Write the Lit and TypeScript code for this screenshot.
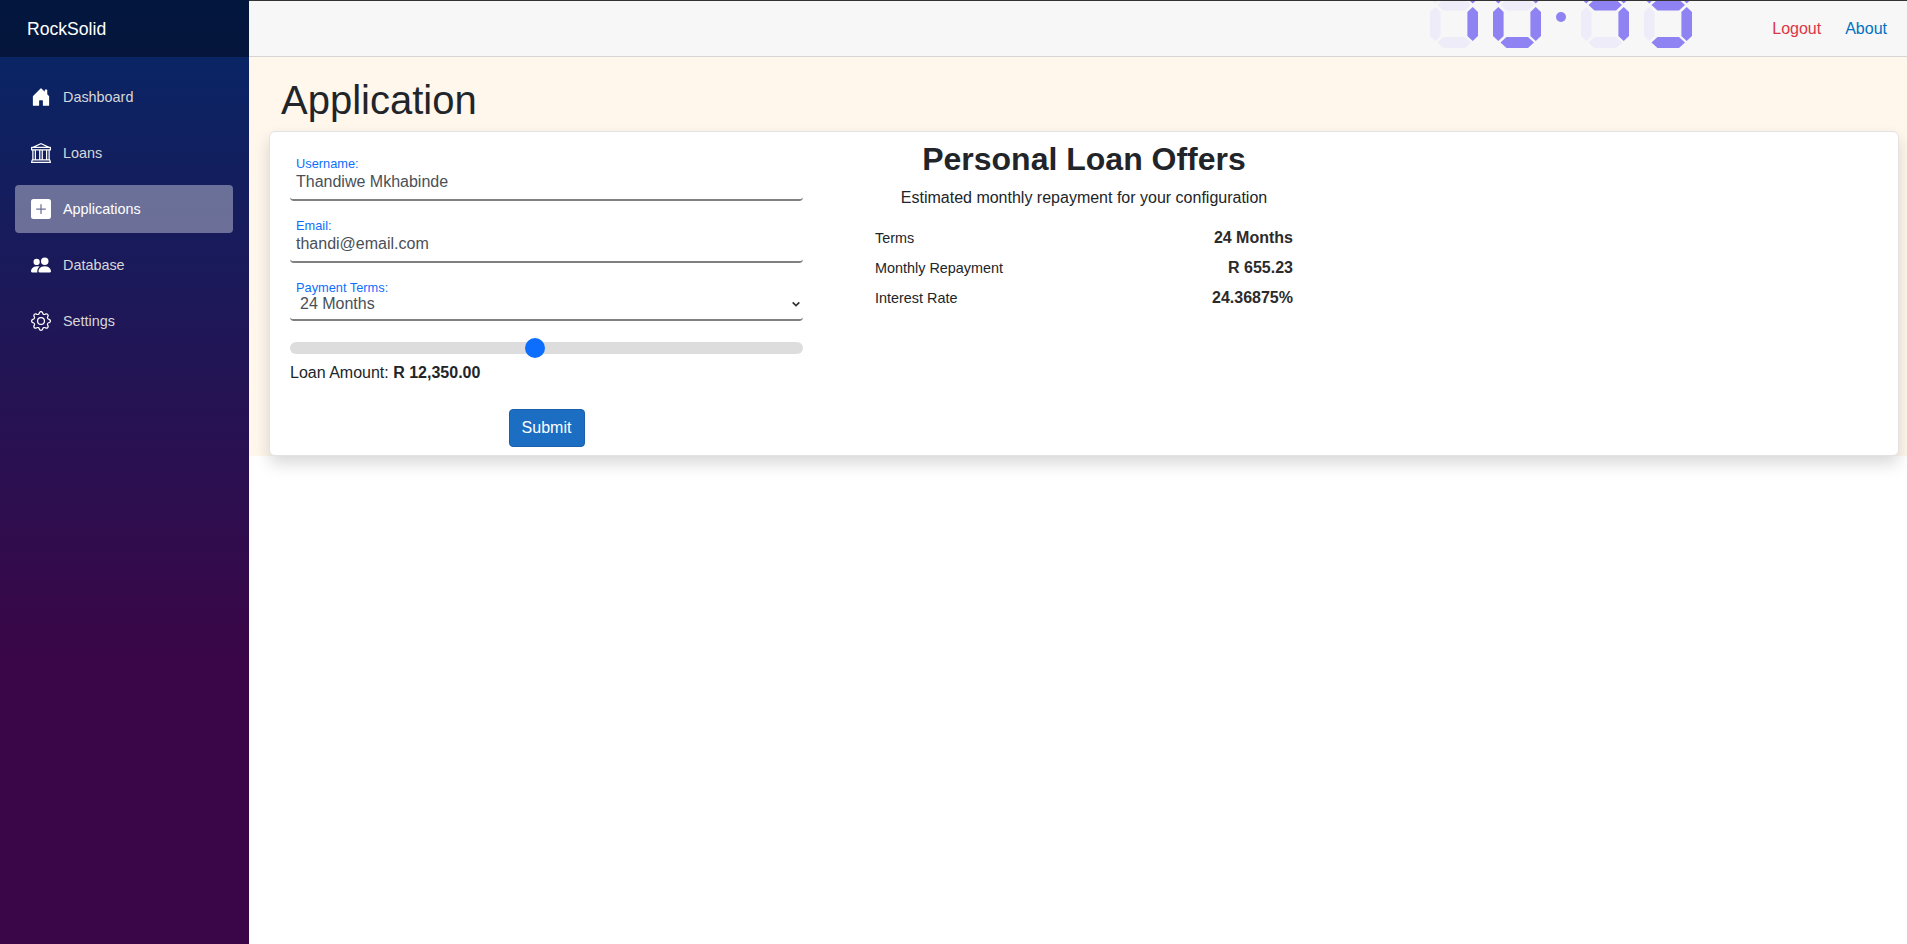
import { LitElement, html, css, svg } from "lit";
import { customElement } from "lit/decorators.js";

const ICONS: Record<string, string[]> = {
  home: ["M6.5 14.5v-3.505c0-.245.25-.495.5-.495h2c.25 0 .5.25.5.5v3.5a.5.5 0 0 0 .5.5h4a.5.5 0 0 0 .5-.5v-7a.5.5 0 0 0-.146-.354L13 5.793V2.5a.5.5 0 0 0-.5-.5h-1a.5.5 0 0 0-.5.5v1.293L8.354 1.146a.5.5 0 0 0-.708 0l-6 6A.5.5 0 0 0 1.5 7.5v7a.5.5 0 0 0 .5.5h4a.5.5 0 0 0 .5-.5Z"],
  bank: ["m8 0 6.61 3h.89a.5.5 0 0 1 .5.5v2a.5.5 0 0 1-.5.5H15v7a.5.5 0 0 1 .485.38l.5 2a.498.498 0 0 1-.485.62H.5a.498.498 0 0 1-.485-.62l.5-2A.501.501 0 0 1 1 13V6H.5a.5.5 0 0 1-.5-.5v-2A.5.5 0 0 1 .5 3h.89L8 0ZM3.777 3h8.447L8 1 3.777 3ZM2 6v7h1V6H2Zm2 0v7h2.5V6H4Zm3.5 0v7h1V6h-1Zm2 0v7H12V6H9.5ZM13 6v7h1V6h-1Zm2-1V4H1v1h14Zm-.39 9H1.39l-.25 1h13.72l-.25-1Z"],
  plus: ["M2 0a2 2 0 0 0-2 2v12a2 2 0 0 0 2 2h12a2 2 0 0 0 2-2V2a2 2 0 0 0-2-2H2zm6.5 4.5v3h3a.5.5 0 0 1 0 1h-3v3a.5.5 0 0 1-1 0v-3h-3a.5.5 0 0 1 0-1h3v-3a.5.5 0 0 1 1 0z"],
  people: ["M7 14s-1 0-1-1 1-4 5-4 5 3 5 4-1 1-1 1H7Zm4-6a3 3 0 1 0 0-6 3 3 0 0 0 0 6Zm-5.784 6A2.238 2.238 0 0 1 5 13c0-1.355.68-2.75 1.936-3.72A6.325 6.325 0 0 0 5 9c-4 0-5 3-5 4s1 1 1 1h4.216ZM4.5 8a2.5 2.5 0 1 0 0-5 2.5 2.5 0 0 0 0 5Z"],
  gear: [
    "M8 4.754a3.246 3.246 0 1 0 0 6.492 3.246 3.246 0 0 0 0-6.492zM5.754 8a2.246 2.246 0 1 1 4.492 0 2.246 2.246 0 0 1-4.492 0z",
    "M9.796 1.343c-.527-1.79-3.065-1.79-3.592 0l-.094.319a.873.873 0 0 1-1.255.52l-.292-.16c-1.64-.892-3.433.902-2.54 2.541l.159.292a.873.873 0 0 1-.52 1.255l-.319.094c-1.79.527-1.79 3.065 0 3.592l.319.094a.873.873 0 0 1 .52 1.255l-.16.292c-.892 1.64.901 3.434 2.541 2.54l.292-.159a.873.873 0 0 1 1.255.52l.094.319c.527 1.79 3.065 1.79 3.592 0l.094-.319a.873.873 0 0 1 1.255-.52l.292.16c1.64.893 3.434-.902 2.54-2.541l-.159-.292a.873.873 0 0 1 .52-1.255l.319-.094c1.79-.527 1.79-3.065 0-3.592l-.319-.094a.873.873 0 0 1-.52-1.255l.16-.292c.893-1.64-.902-3.433-2.541-2.54l-.292.159a.873.873 0 0 1-1.255-.52l-.094-.319zm-2.633.283c.246-.835 1.428-.835 1.674 0l.094.319a1.873 1.873 0 0 0 2.693 1.115l.291-.16c.764-.415 1.6.42 1.184 1.185l-.159.292a1.873 1.873 0 0 0 1.116 2.692l.318.094c.835.246.835 1.428 0 1.674l-.319.094a1.873 1.873 0 0 0-1.115 2.693l.16.291c.415.764-.42 1.6-1.185 1.184l-.291-.159a1.873 1.873 0 0 0-2.693 1.116l-.094.318c-.246.835-1.428.835-1.674 0l-.094-.319a1.873 1.873 0 0 0-2.692-1.115l-.292.16c-.764.415-1.6-.42-1.184-1.185l.159-.291A1.873 1.873 0 0 0 1.945 8.93l-.319-.094c-.835-.246-.835-1.428 0-1.674l.319-.094A1.873 1.873 0 0 0 3.06 4.377l-.16-.292c-.415-.764.42-1.6 1.185-1.184l.292.159a1.873 1.873 0 0 0 2.692-1.115l.094-.319z",
  ],
};

const NAV = [
  { label: "Dashboard", icon: "home" },
  { label: "Loans", icon: "bank" },
  { label: "Applications", icon: "plus", active: true },
  { label: "Database", icon: "people" },
  { label: "Settings", icon: "gear" },
];

// seven segments: a top, b upper right, c lower right, d bottom, e lower left, f upper left, g middle
const DIGIT_SEGMENTS: Record<string, string> = {
  "0": "abcdef",
  "1": "bc",
  "4": "bcfg",
  "9": "abcdfg",
};

function hSeg(cy: number) {
  return `7.5,${cy} 13.5,${cy - 5.5} 35,${cy - 5.5} 41,${cy} 35,${cy + 5.5} 13.5,${cy + 5.5}`;
}
function vSeg(x: number, cy: number) {
  return `${x + 5.3},${cy - 17} ${x + 10.6},${cy - 12} ${x + 10.6},${cy + 12} ${x + 5.3},${cy + 17} ${x},${cy + 12} ${x},${cy - 12}`;
}

const SEG_POINTS: Record<string, string> = {
  a: hSeg(-32.5),
  b: vSeg(37.4, -13.5),
  c: vSeg(37.4, 24),
  d: hSeg(42.5),
  e: vSeg(0, 24),
  f: vSeg(0, -13.5),
  g: hSeg(5),
};

function digit(d: string, x: number) {
  const lit = DIGIT_SEGMENTS[d];
  return svg`<g transform="translate(${x} 0)">
    ${Object.keys(SEG_POINTS).map(
      (k) => svg`<polygon class=${lit.includes(k) ? "on" : "off"} points=${SEG_POINTS[k]}></polygon>`
    )}
  </g>`;
}

@customElement("app-root")
export class AppRoot extends LitElement {
  static styles = css`
    :host {
      display: block;
      font-family: "Liberation Sans", Arial, sans-serif;
      color: #212529;
      background: #fff;
    }
    * { box-sizing: border-box; }
    .edge { height: 1px; background: #333; }
    .app { display: flex; min-height: 943px; }
    .sidebar {
      flex: 0 0 249px;
      background-image: linear-gradient(180deg, rgb(5, 39, 103) 0%, #3a0647 70%);
      margin-top: -1px;
    }
    .brand {
      height: 57px;
      background: rgba(0, 0, 0, 0.4);
      color: #fff;
      font-size: 17.6px;
      line-height: 58px;
      padding-left: 27px;
    }
    .nav { display: flex; flex-direction: column; gap: 8px; padding: 16px 16px 0 15px; }
    .link {
      display: flex;
      align-items: center;
      gap: 12px;
      height: 48px;
      padding-left: 16px;
      border-radius: 4px;
      color: #d7d7d7;
      font-size: 14.4px;
      text-decoration: none;
    }
    .link.active { background: rgba(255, 255, 255, 0.37); color: #fff; }
    .link svg { width: 20px; height: 20px; fill: #fff; flex: none; }
    .main { flex: 1; min-width: 0; display: flex; flex-direction: column; }
    .top {
      height: 56px;
      flex: none;
      display: flex;
      align-items: flex-start;
      background: #f7f7f7;
      border-bottom: 1px solid #d6d5d5;
      overflow: hidden;
    }
    .clock { display: block; width: 263px; height: 55px; margin: 0 0 0 auto; overflow: hidden; }
    .clock .on { fill: #8f82f2; }
    .clock .off { fill: #eeecf9; }
    .clock circle { fill: #8f82f2; }
    .top-links { display: flex; gap: 24px; padding: 0 20px 0 79px; line-height: 56px; font-size: 16px; }
    .logout { color: #dc3545; text-decoration: none; }
    .about { color: #0071c1; text-decoration: none; }
    .band { background: #fff6ec; padding: 19px 8px 0 20px; height: 399px; flex: none; }
    h1 { margin: 0 0 7px 12px; font-weight: 400; font-size: 40px; line-height: 48px; }
    .card {
      height: 325px;
      background: #fff;
      border: 1px solid #e3e3e3;
      border-radius: 6px;
      box-shadow: 0 8px 16px rgba(0, 0, 0, 0.15);
      padding: 25px 0 0 20px;
      display: flex;
      gap: 72px;
    }
    .form { width: 513px; flex: none; display: flex; flex-direction: column; }
    .field {
      border-bottom: 2px solid #808080;
      border-radius: 0 0 4px 4px;
      padding: 0 6px 6px;
      margin-bottom: 18px;
    }
    .field label { display: block; color: #0d6efd; font-size: 12.8px; line-height: 14px; }
    .field input, .field select {
      display: block;
      width: 100%;
      border: 0;
      outline: 0;
      padding: 0;
      background: transparent;
      color: #495057;
      font: 16px/22px "Liberation Sans", Arial, sans-serif;
      height: 22px;
    }
    .field.sel { margin-bottom: 21px; }
    .select-wrap { position: relative; margin-top: -1px; }
    .field select { appearance: none; height: 19px; line-height: 19px; padding-left: 4px; }
    .chev { position: absolute; right: -4px; top: 5px; width: 10px; height: 10px; fill: none; stroke: #333; stroke-width: 2; pointer-events: none; }
    input[type="range"] {
      -webkit-appearance: none;
      appearance: none;
      display: block;
      width: 100%;
      height: 12px;
      margin: 0;
      background: #ddd;
      border-radius: 6px;
      outline: 0;
    }
    input[type="range"]::-webkit-slider-thumb {
      -webkit-appearance: none;
      width: 20px;
      height: 20px;
      border-radius: 50%;
      background: #0d6efd;
      border: 0;
    }
    .amount { margin-top: 9px; font-size: 16px; line-height: 19px; color: #212529; }
    .actions { display: flex; justify-content: center; margin-top: 27px; }
    button {
      width: 76px;
      height: 38px;
      background: #1b6ec2;
      border: 1px solid #1861ac;
      border-radius: 4px;
      color: #fff;
      font: 16px "Liberation Sans", Arial, sans-serif;
    }
    .offers { width: 418px; flex: none; }
    h2 { margin: -17px 0 0; text-align: center; font-size: 32px; line-height: 38px; font-weight: 700; }
    .sub { margin: 8px 0 0; text-align: center; font-size: 16px; line-height: 24px; }
    .rows { margin-top: 13px; display: flex; flex-direction: column; }
    .row { display: flex; justify-content: space-between; align-items: center; height: 30px; font-size: 14.4px; }
    .row b { font-size: 16px; color: #2b2b2b; }
  `;

  private renderIcon(name: string) {
    return html`<svg viewBox="0 0 16 16" aria-hidden="true">${ICONS[name].map((d) => svg`<path d=${d}></path>`)}</svg>`;
  }

  render() {
    return html`
      <div class="edge"></div>
      <div class="app">
        <aside class="sidebar">
          <div class="brand">RockSolid</div>
          <nav class="nav">
            ${NAV.map(
              (n) => html`<a class="link ${n.active ? "active" : ""}" href="#">${this.renderIcon(n.icon)}<span>${n.label}</span></a>`
            )}
          </nav>
        </aside>
        <div class="main">
          <header class="top">
            <svg class="clock" viewBox="0 1 263 55" aria-label="10:49">
              ${digit("1", 0)}${digit("0", 63)}
              <circle cx="131" cy="17" r="5"></circle>
              ${digit("4", 151)}${digit("9", 214)}
            </svg>
            <div class="top-links">
              <a class="logout" href="#">Logout</a>
              <a class="about" href="#">About</a>
            </div>
          </header>
          <section class="band">
            <h1>Application</h1>
            <div class="card">
              <form class="form">
                <div class="field">
                  <label>Username:</label>
                  <input value="Thandiwe Mkhabinde" />
                </div>
                <div class="field">
                  <label>Email:</label>
                  <input value="thandi@email.com" />
                </div>
                <div class="field sel">
                  <label>Payment Terms:</label>
                  <div class="select-wrap">
                    <select>
                      <option>24 Months</option>
                    </select>
                    <svg class="chev" viewBox="0 0 12 12"><path d="M2 4l4 4 4-4"></path></svg>
                  </div>
                </div>
                <input type="range" min="0" max="100" step="0.1" value="47.6" />
                <div class="amount">Loan Amount: <b>R 12,350.00</b></div>
                <div class="actions"><button type="button">Submit</button></div>
              </form>
              <div class="offers">
                <h2>Personal Loan Offers</h2>
                <p class="sub">Estimated monthly repayment for your configuration</p>
                <div class="rows">
                  <div class="row"><span>Terms</span><b>24 Months</b></div>
                  <div class="row"><span>Monthly Repayment</span><b>R 655.23</b></div>
                  <div class="row"><span>Interest Rate</span><b>24.36875%</b></div>
                </div>
              </div>
            </div>
          </section>
        </div>
      </div>
    `;
  }
}
